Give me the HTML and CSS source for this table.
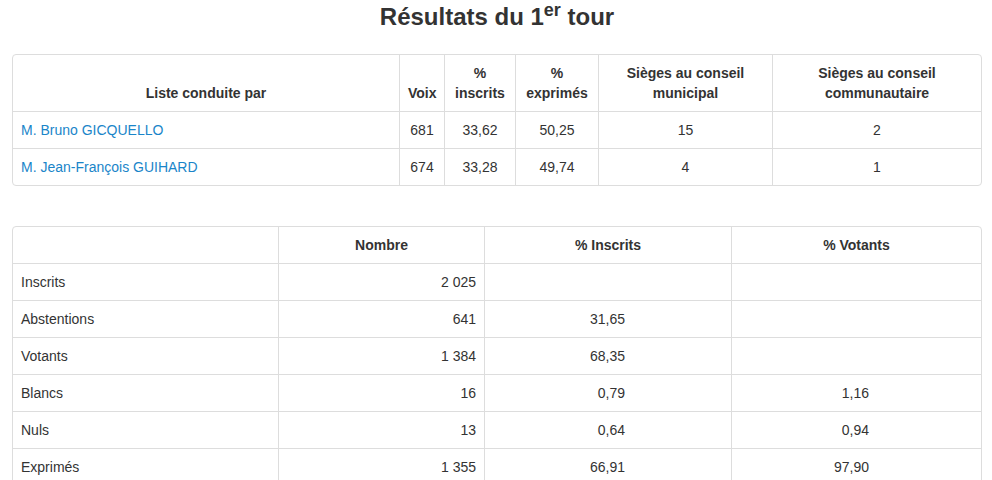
FILE: index.html
```html
<!DOCTYPE html>
<html lang="fr">
<head>
<meta charset="utf-8">
<title>Résultats du 1er tour</title>
<link rel="stylesheet" href="styles.css">
</head>
<body>
<div class="page">
  <h1 class="title">Résultats du 1<sup>er</sup> tour</h1>

  <div class="panel">
    <table class="grid">
      <thead>
        <tr>
          <th class="w-liste">Liste conduite par</th>
          <th class="w-voix">Voix</th>
          <th class="w-pins">%<br>inscrits</th>
          <th class="w-pexp">%<br>exprimés</th>
          <th class="w-mun">Sièges au conseil<br>municipal</th>
          <th class="w-com">Sièges au conseil<br>communautaire</th>
        </tr>
      </thead>
      <tbody>
        <tr>
          <td class="left"><a href="#">M. Bruno GICQUELLO</a></td>
          <td>681</td>
          <td>33,62</td>
          <td>50,25</td>
          <td>15</td>
          <td>2</td>
        </tr>
        <tr>
          <td class="left"><a href="#">M. Jean-François GUIHARD</a></td>
          <td>674</td>
          <td>33,28</td>
          <td>49,74</td>
          <td>4</td>
          <td>1</td>
        </tr>
      </tbody>
    </table>
  </div>

  <div class="panel">
    <table class="grid">
      <thead>
        <tr>
          <th class="w-label"></th>
          <th class="w-nombre">Nombre</th>
          <th class="w-ins">% Inscrits</th>
          <th class="w-vot">% Votants</th>
        </tr>
      </thead>
      <tbody>
        <tr><td class="left">Inscrits</td><td class="num">2 025</td><td class="p-ins"></td><td class="p-vot"></td></tr>
        <tr><td class="left">Abstentions</td><td class="num">641</td><td class="p-ins">31,65</td><td class="p-vot"></td></tr>
        <tr><td class="left">Votants</td><td class="num">1 384</td><td class="p-ins">68,35</td><td class="p-vot"></td></tr>
        <tr><td class="left">Blancs</td><td class="num">16</td><td class="p-ins">0,79</td><td class="p-vot">1,16</td></tr>
        <tr><td class="left">Nuls</td><td class="num">13</td><td class="p-ins">0,64</td><td class="p-vot">0,94</td></tr>
        <tr><td class="left">Exprimés</td><td class="num">1 355</td><td class="p-ins">66,91</td><td class="p-vot">97,90</td></tr>
      </tbody>
    </table>
  </div>
</div>
</body>
</html>
```

FILE: styles.css
```css
html, body {
  margin: 0;
  padding: 0;
  background: #fff;
}

body {
  font-family: "Liberation Sans", Arial, sans-serif;
  font-size: 14px;
  line-height: 20px;
  color: #333;
}

.page {
  padding: 4px 10px 0 12px;
}

.title {
  margin: 0 0 24px;
  font-size: 24px;
  line-height: 26px;
  font-weight: bold;
  text-align: center;
  color: #333;
}

.title sup {
  font-size: 75%;
  line-height: 0;
  position: relative;
  top: -0.5em;
  vertical-align: baseline;
}

.panel {
  border: 1px solid #ddd;
  border-radius: 4px;
  overflow: hidden;
  margin-bottom: 40px;
}

.grid {
  width: 100%;
  table-layout: fixed;
  border-collapse: separate;
  border-spacing: 0;
}

.grid th,
.grid td {
  box-sizing: border-box;
  padding: 8px;
  border-left: 1px solid #ddd;
  border-top: 1px solid #ddd;
  text-align: center;
  vertical-align: middle;
}

.grid th {
  font-weight: bold;
  vertical-align: bottom;
  border-top: 0;
}

.grid th:first-child,
.grid td:first-child {
  border-left: 0;
}

.grid td.left {
  text-align: left;
}

.grid td.num {
  text-align: right;
}

.grid td.p-ins {
  text-align: right;
  padding-right: 106px;
}

.grid td.p-vot {
  text-align: right;
  padding-right: 112px;
}

.grid a {
  color: #1a85c9;
  text-decoration: none;
}

.w-liste { width: 386px; }
.w-voix { width: 45px; }
.w-pins { width: 71px; }
.w-pexp { width: 83px; }
.w-mun { width: 174px; }
.w-com { width: 209px; }

.w-label { width: 265px; }
.w-nombre { width: 206px; }
.w-ins { width: 247px; }
.w-vot { width: 250px; }
```
